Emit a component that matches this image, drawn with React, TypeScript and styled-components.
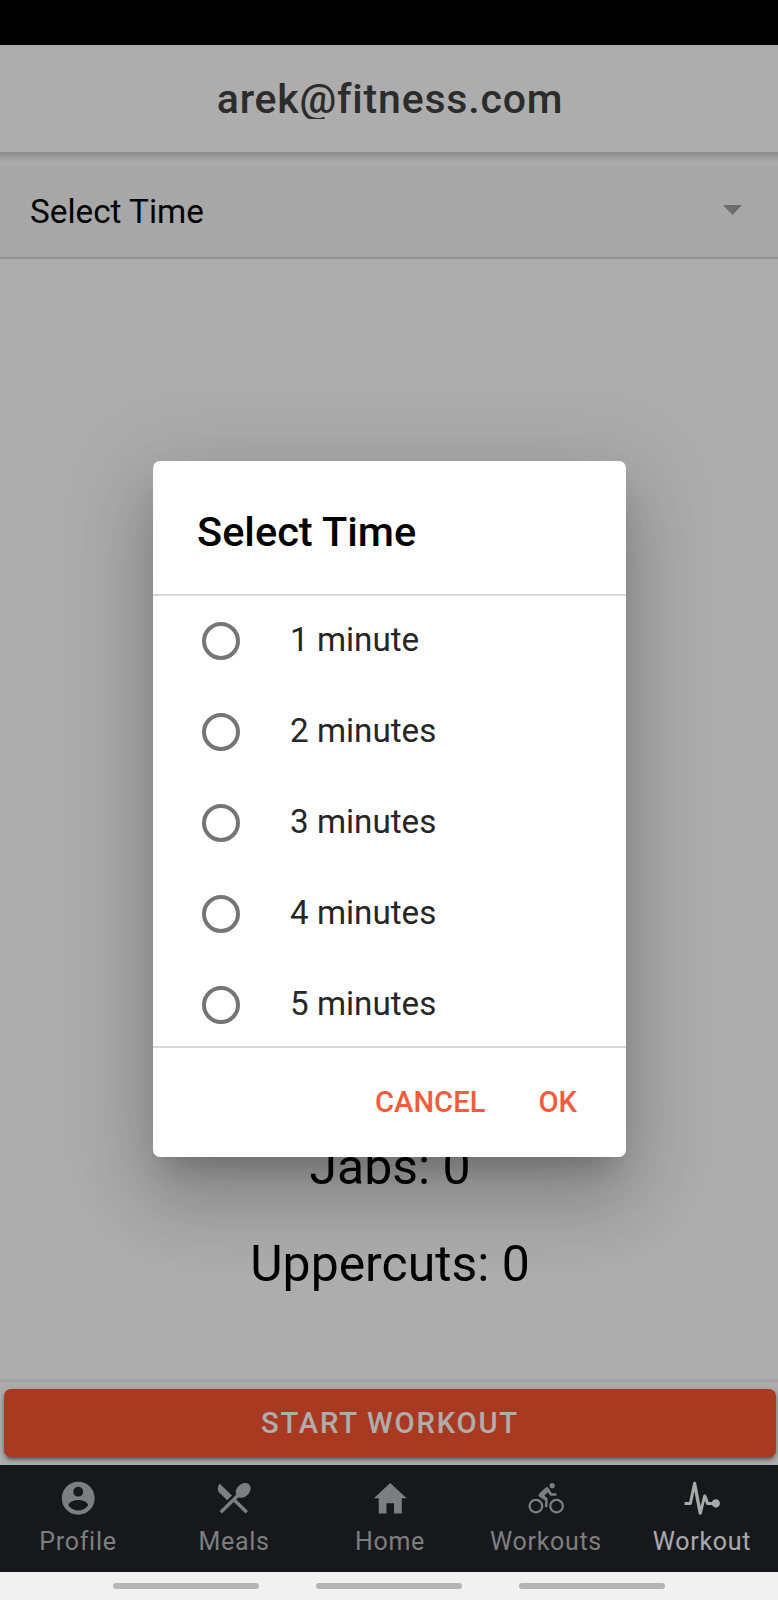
import React from 'react';
import styled, { createGlobalStyle } from 'styled-components';
import { IoMdContact, IoMdRestaurant, IoMdHome, IoMdBicycle, IoMdPulse } from 'react-icons/io';

const GlobalStyle = createGlobalStyle`
  *, *::before, *::after { box-sizing: border-box; }
  body { margin: 0; font-family: Roboto, sans-serif; -webkit-font-smoothing: antialiased; }
  button { font-family: inherit; border: 0; background: none; padding: 0; }
`;

const Screen = styled.div`
  position: relative;
  display: flex;
  flex-direction: column;
  width: 778px;
  height: 1600px;
  overflow: hidden;
  background: #fff;
`;

const StatusBar = styled.div`
  height: 45px;
  flex: none;
  background: #000;
`;

const AppArea = styled.div`
  position: relative;
  flex: 1;
  display: flex;
  flex-direction: column;
  min-height: 0;
`;

const Header = styled.header`
  position: relative;
  z-index: 1;
  flex: none;
  display: flex;
  align-items: center;
  justify-content: center;
  height: 107px;
  padding-left: 2px;
  &::after {
    content: '';
    position: absolute;
    left: 0;
    right: 0;
    top: 100%;
    height: 11px;
    background: linear-gradient(rgba(0, 0, 0, 0.2), rgba(0, 0, 0, 0.08) 50%, rgba(0, 0, 0, 0));
  }
`;

const HeaderTitle = styled.h1`
  margin: 0;
  height: 40px;
  overflow: hidden;
  font-size: 41px;
  line-height: 40px;
  font-weight: 500;
  letter-spacing: 0.8px;
  color: #424242;
`;

const SelectRow = styled.div`
  flex: none;
  display: flex;
  align-items: center;
  justify-content: space-between;
  margin-top: 14px;
  height: 93px;
  padding: 0 36px 0 30px;
  background: #f6f6f6;
  border-bottom: 2px solid #dadada;
  font-size: 33.3px;
  color: #000;
`;

const Caret = styled.svg`
  width: 19px;
  height: 10px;
  margin-top: -3px;
  fill: #a3a3a3;
`;

const Results = styled.main`
  flex: 1;
  display: flex;
  flex-direction: column;
  justify-content: flex-end;
  align-items: center;
  padding: 0 0 88px 2px;
`;

const Result = styled.p`
  margin: 38px 0 0;
  line-height: 59px;
  font-size: 49.9px;
  color: #000;
`;

const Footer = styled.footer`
  position: relative;
  flex: none;
  height: 83px;
  padding: 7px 2px 7px 4px;
  &::before {
    content: '';
    position: absolute;
    left: 0;
    right: 0;
    bottom: 100%;
    height: 4px;
    background: linear-gradient(rgba(0, 0, 0, 0), rgba(0, 0, 0, 0.08));
  }
`;

const StartButton = styled.button`
  display: block;
  width: 100%;
  height: 68px;
  padding-bottom: 1px;
  border-radius: 7px;
  background: #fb5533;
  box-shadow: 0 5px 2px -3px rgba(0, 0, 0, 0.2), 0 3px 4px rgba(0, 0, 0, 0.3), 0 1px 8px rgba(0, 0, 0, 0.12);
  color: #fff;
  font-size: 29.2px;
  font-weight: 500;
  letter-spacing: 1.8px;
`;

const TabBar = styled.nav`
  flex: none;
  display: grid;
  grid-template-columns: repeat(5, 156px);
  height: 107px;
  background: #222428;
`;

const Tab = styled.div<{ $active?: boolean }>`
  display: flex;
  flex-direction: column;
  align-items: center;
  padding-top: 13px;
  color: ${p => (p.$active ? '#fafafa' : '#b9babc')};
  svg { width: 40.5px; height: 40.5px; flex: none; }
`;

const TabLabel = styled.span`
  margin-top: 7px;
  font-size: 25px;
  line-height: 32px;
  letter-spacing: 0.7px;
`;

const Backdrop = styled.div`
  position: absolute;
  inset: 0;
  z-index: 2;
  display: flex;
  align-items: flex-start;
  justify-content: center;
  padding: 416px 0 0 1px;
  background: rgba(0, 0, 0, 0.32);
`;

const Dialog = styled.div`
  display: flex;
  flex-direction: column;
  width: 473px;
  height: 696px;
  border-radius: 7px;
  background: #fff;
  box-shadow: 0 21px 28px -13px rgba(0, 0, 0, 0.2), 0 45px 72px 6px rgba(0, 0, 0, 0.14),
    0 17px 87px 15px rgba(0, 0, 0, 0.12);
`;

const DialogTitle = styled.h2`
  margin: 0;
  height: 133px;
  padding: 46px 44px 0;
  font-size: 41.5px;
  line-height: 49px;
  font-weight: 500;
  color: #000;
`;

const Options = styled.div`
  height: 454px;
  border-top: 2px solid #d8d8d8;
  border-bottom: 2px solid #d8d8d8;
  overflow: hidden;
`;

const Option = styled.div`
  display: flex;
  align-items: center;
  height: 90.9px;
  padding-left: 49px;
  gap: 49px;
  font-size: 33.2px;
  line-height: 38px;
  color: #262626;
`;

const OptionLabel = styled.span`
  padding-bottom: 3px;
`;

const Radio = styled.span`
  width: 38px;
  height: 38px;
  margin-right: 1px;
  margin-bottom: 1px;
  border: 4px solid #757575;
  border-radius: 50%;
`;

const Actions = styled.div`
  flex: 1;
  display: flex;
  justify-content: flex-end;
  align-items: center;
  gap: 53px;
  padding: 0 49px 2px 0;
`;

const ActionButton = styled.button`
  font-size: 29.2px;
  font-weight: 500;
  color: #f25c3c;
`;

const SystemBar = styled.div`
  flex: none;
  height: 28px;
  display: flex;
  justify-content: center;
  gap: 57px;
  padding-top: 11px;
  background: #f1f1f1;
`;

const Handle = styled.span`
  width: 146px;
  height: 6px;
  border-radius: 3px;
  background: #b5b5b5;
`;

const tabs = [
  { label: 'Profile', Icon: IoMdContact },
  { label: 'Meals', Icon: IoMdRestaurant },
  { label: 'Home', Icon: IoMdHome },
  { label: 'Workouts', Icon: IoMdBicycle },
  { label: 'Workout', Icon: IoMdPulse },
];

const times = ['1 minute', '2 minutes', '3 minutes', '4 minutes', '5 minutes'];

export default function App() {
  return (
    <>
      <GlobalStyle />
      <Screen>
        <StatusBar />
        <AppArea>
          <Header>
            <HeaderTitle>arek@fitness.com</HeaderTitle>
          </Header>
          <SelectRow>
            <span>Select Time</span>
            <Caret viewBox="0 0 19 10"><path d="M0 0h19L9.5 10z" /></Caret>
          </SelectRow>
          <Results>
            <Result>Jabs: 0</Result>
            <Result>Uppercuts: 0</Result>
          </Results>
          <Footer>
            <StartButton>START WORKOUT</StartButton>
          </Footer>
          <TabBar>
            {tabs.map(({ label, Icon }) => (
              <Tab key={label} $active={label === 'Workout'}>
                <Icon />
                <TabLabel>{label}</TabLabel>
              </Tab>
            ))}
          </TabBar>
          <Backdrop>
            <Dialog role="dialog">
              <DialogTitle>Select Time</DialogTitle>
              <Options>
                {times.map(time => (
                  <Option key={time}>
                    <Radio />
                    <OptionLabel>{time}</OptionLabel>
                  </Option>
                ))}
              </Options>
              <Actions>
                <ActionButton>CANCEL</ActionButton>
                <ActionButton>OK</ActionButton>
              </Actions>
            </Dialog>
          </Backdrop>
        </AppArea>
        <SystemBar>
          <Handle />
          <Handle />
          <Handle />
        </SystemBar>
      </Screen>
    </>
  );
}
